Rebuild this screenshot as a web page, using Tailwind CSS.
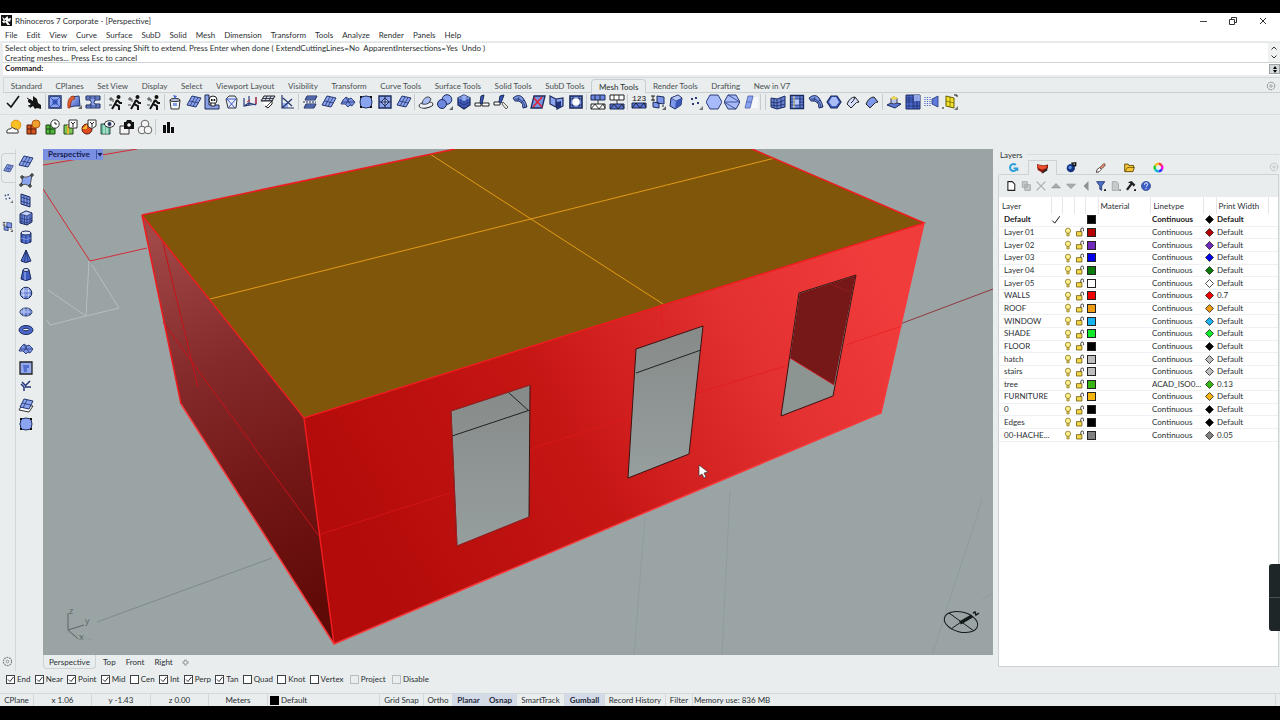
<!DOCTYPE html>
<html lang="en">
<head>
  <meta charset="UTF-8" />
  <meta name="viewport" content="width=device-width, initial-scale=1.0" />
  <title>Rhinoceros 7 Corporate - [Perspective]</title>
  <script src="https://cdn.jsdelivr.net/npm/@tailwindcss/browser@4"></script>
</head>
<body class="h-screen overflow-hidden flex flex-col bg-black pt-[13px] pb-[14px] font-['Lato','Open_Sans',sans-serif] text-[8px] leading-[12px] text-[#2b3033]">

  <!-- icon sprite -->
  <svg class="absolute size-0">
    <defs>
      <linearGradient id="b" x1="0" y1="0" x2="1" y2="1"><stop offset="0" stop-color="#a9bdf6"/><stop offset="1" stop-color="#3f5cc0"/></linearGradient>
    </defs>
    <symbol id="rhino" viewBox="0 0 12 12"><path d="M0 0h12v12H0z" fill="#111"/><path d="M1 2l3 2 3-3 1 3 3-1-1 4-3 0 3 4H7L5 8 3 9 1 7l2-1z" fill="#fff"/><path d="M4 5l2 1-2 1z" fill="#111"/></symbol>
    <symbol id="check" viewBox="0 0 16 16"><path d="M2 9l4 4 8-11" fill="none" stroke="#111" stroke-width="1.6"/></symbol>
    <symbol id="hand" viewBox="0 0 16 16"><path d="M2 6l2-1 3 2V2l4 3 1 4 3 2v4l-4-1-2 1-2-3-3 2-1-2 2-2-3-2z" fill="#161616"/><path d="M1 4l3 2M2 12l3-1" stroke="#161616"/></symbol>
    <symbol id="meshsq" viewBox="0 0 16 16"><path d="M2 2h12v12H2z" fill="#8ba4f0" stroke="#1b2a5c" stroke-width="1.4"/><path d="M2 2l4 4M14 2l-4 4M2 14l4-4M14 14l-4-4M6 6h4v4H6z" fill="#3654b8" stroke="#3654b8"/></symbol>
    <symbol id="paint" viewBox="0 0 16 16"><path d="M5 3l8-1 1 10-5 0-5 1z" fill="url(#b)" stroke="#27386e"/><path d="M2 14C1 7 3 2 8 2l1 3C5 5 5 9 4 14z" fill="#e35b2c" stroke="#7e2a18" stroke-width=".6"/><path d="M12 15h4v-4z" fill="#666"/></symbol>
    <symbol id="gridfold" viewBox="0 0 16 16"><path d="M1 2h14v4H10q-2 3 0 4h5v4H1v-3h4q3-3 0-5H1z" fill="#8ba4f0" stroke="#1b2a5c"/><path d="M5 2v4M10 2v4M1 4h14M1 12h14M6 10v4M11 10v4" stroke="#1b2a5c" stroke-width=".7"/></symbol>
    <symbol id="man" viewBox="0 0 16 16"><circle cx="10.500" cy="3" r="2" fill="#111"/><path d="M9 6l-2 4 4 2v4M9 6l3 3h2M7 10l-3 5" fill="none" stroke="#111" stroke-width="2"/><path d="M1 5h4v3M3 3v4M1 11h3" stroke="#333" stroke-width=".9" fill="none"/></symbol>
    <symbol id="bin" viewBox="0 0 16 16"><path d="M3 6h10l-1 9H4z" fill="#f4f6fa" stroke="#333"/><ellipse cx="8" cy="6" rx="5" ry="1.600" fill="#b9c3dd" stroke="#333"/><path d="M6 1l4 1-2 3z" fill="#4b68cf"/><path d="M6 9h4v3H6z" fill="#7f9bea"/></symbol>
    <symbol id="plane" viewBox="0 0 16 16"><path d="M6 2l9 2-5 9-9-2z" fill="#8ba4f0" stroke="#25366f"/><path d="M3.500 7l9 2M9 3L4 12M12 3.500L7 12.500" stroke="#25366f" stroke-width=".8"/></symbol>
    <symbol id="pillow" viewBox="0 0 16 16"><path d="M3 6l3-3 3 2 2-1 4 4-3 4-2-1-2 2-3-3-4 0z" fill="#7d98ea" stroke="#25366f" stroke-width=".9"/><path d="M6 4l5 7M2 8h12M9 5L6 10" stroke="#25366f" stroke-width=".8"/></symbol>
    <symbol id="skull" viewBox="0 0 16 16"><path d="M1 1h4v10h10v4H1z" fill="#8ba2e8" stroke="#1d2a55"/><circle cx="9" cy="6" r="4" fill="#fff" stroke="#222"/><path d="M7 9h4v3H7z" fill="#fff" stroke="#222"/><path d="M7 5h1.600v2H7zM9.600 5h1.600v2H9.600z" fill="#111"/></symbol>
    <symbol id="boxx" viewBox="0 0 16 16"><path d="M3 5l3-3h6l2 3-1 9H5z" fill="#e8edfb" stroke="#333"/><path d="M3 5h10L5 14M4 5l8 9" fill="none" stroke="#3d5ac6"/></symbol>
    <symbol id="dims" viewBox="0 0 16 16"><path d="M2 4v8l12-2V3M7 2v9M2 12l5-3 7 2" fill="none" stroke="#2b3f7f" stroke-width="1.200"/><path d="M14 3v7M5 8l3-2" stroke="#d23"/></symbol>
    <symbol id="tile" viewBox="0 0 16 16"><path d="M4 2h11l-3 5H1z" fill="#cfd9f6" stroke="#222"/><path d="M2 7h10v3l-4 4-3-2" fill="#fff" stroke="#222"/><path d="M7 2L5 7M11 2L9 7M6 13l7-7M3 4.500h11" stroke="#222" stroke-width=".8"/></symbol>
    <symbol id="axis" viewBox="0 0 16 16"><path d="M3 9h6v5H3z" fill="#9db2f2"/><path d="M3 1v13h12M3 14l10-9M4 4l9 8" fill="none" stroke="#26366e" stroke-width="1.200"/></symbol>
    <symbol id="stack" viewBox="0 0 16 16"><path d="M5 2h10l-2 4H3zM4 10h10l-2 4H2z" fill="#7d98ea" stroke="#1d2b5c"/><path d="M4 4h10M3 12h10" stroke="#1d2b5c" stroke-width=".9"/><path d="M1 8h13" stroke="#1d2b5c" stroke-dasharray="2 1"/></symbol>
    <symbol id="rsq" viewBox="0 0 16 16"><path d="M3 3q5-2 10 0 2 5 0 10-5 2-10 0-2-5 0-10z" fill="#8ba4f0" stroke="#1d2b5c"/><path d="M2 2h2v2H2zM12 2h2v2h-2zM2 12h2v2H2zM12 12h2v2h-2z" fill="#111"/></symbol>
    <symbol id="diag" viewBox="0 0 16 16"><path d="M2 2h12v12H2z" fill="#8ba3ea" stroke="#1d2b5c" stroke-width="1.400"/><path d="M8 2v12M2 8h12M8 4l4 4-4 4-4-4z" fill="#c3d0fa" stroke="#1d2b5c"/></symbol>
    <symbol id="cap" viewBox="0 0 16 16"><ellipse cx="8" cy="11" rx="7" ry="3" fill="#eef1f8" stroke="#222" transform="rotate(-8 8 11)"/><path d="M4 10c1-7 7-9 9-5l-2 4q-3 2-7 1z" fill="#a9bdf6" stroke="#222" stroke-width=".8"/></symbol>
    <symbol id="balls" viewBox="0 0 16 16"><circle cx="10" cy="5.500" r="4.800" fill="#8ba4f0" stroke="#1b2a5c"/><circle cx="5" cy="10" r="4.500" fill="#6c87dd" stroke="#1b2a5c"/><path d="M12 16h4v-4z" fill="#666"/></symbol>
    <symbol id="hexball" viewBox="0 0 16 16"><path d="M8 1l6 3v7l-6 4-6-4V4z" fill="#4461c7" stroke="#1b2a5c" stroke-width="1.300"/><path d="M8 1l6 3-6 3-6-3z" fill="#93abf2"/><path d="M8 7v8M5 3v9M11 3v9M2 8l6 3 6-3" stroke="#1b2a5c" stroke-width=".6" fill="none"/></symbol>
    <symbol id="cut" viewBox="0 0 16 16"><path d="M1 9h6v3H1zM8 9h7v3H8z" fill="#fff" stroke="#222"/><path d="M6 9l1-7 3-1-2 9z" fill="#3a56b8" stroke="#1b2a5c"/></symbol>
    <symbol id="cut2" viewBox="0 0 16 16"><path d="M1 8h6v3H1z" fill="#fff" stroke="#222"/><path d="M6 8l1-6 4-1-3 8z" fill="#3a56b8" stroke="#1b2a5c"/><path d="M10 8l5 5-2 2-4-5z" fill="#f1f1e8" stroke="#555"/></symbol>
    <symbol id="bend" viewBox="0 0 16 16"><path d="M1 4q6-5 10 0 3 4 4 9l-4 1q0-8-8-7z" fill="#7d98ea" stroke="#1b2a5c"/><path d="M3 5q8-1 10 8M7 3q-1 2-1 4M12 6l-3 3" stroke="#1b2a5c" stroke-width=".8" fill="none"/></symbol>
    <symbol id="redx" viewBox="0 0 16 16"><path d="M4 2h11l-3 12H1z" fill="#7b93e3" stroke="#1b2a5c" stroke-width="1.300"/><path d="M4 4l8 9M12 3L3 13" stroke="#e12430" stroke-width="1.500"/></symbol>
    <symbol id="tri" viewBox="0 0 16 16"><path d="M1 2l6 3v8l-6-3zM7 5l7-1v8l-6 3z" fill="#8ba4f0" stroke="#1b2a5c" stroke-width="1.200"/><path d="M8 8l4-1v6l-4 2z" fill="#22347a"/></symbol>
    <symbol id="hole" viewBox="0 0 16 16"><path d="M2 2h12v12H2z" fill="#7690e2" stroke="#1b2a5c" stroke-width="1.600"/><path d="M2 5h12M2 11h12M5 2v12M11 2v12" stroke="#1b2a5c" stroke-width=".9"/><circle cx="8" cy="8" r="3.800" fill="#fff"/></symbol>
    <symbol id="split" viewBox="0 0 16 16"><path d="M1 1h14v5H1z" fill="#6d88e0" stroke="#1b2a5c"/><path d="M1 10h14v5H1z" fill="#fff" stroke="#222"/><path d="M5 1v5M10 1v5M1 15l4-5 4 5 4-5 2 4M8 6v4" fill="none" stroke="#222" stroke-width=".9"/></symbol>
    <symbol id="split2" viewBox="0 0 16 16"><path d="M1 1h14v5H1z" fill="#fff" stroke="#222"/><path d="M1 10h14v5H1z" fill="#5470cf" stroke="#1b2a5c"/><path d="M5 1v5M10 1v5M1 15l4-5 4 5 4-5 2 4M8 6v4" fill="none" stroke="#222" stroke-width=".9"/></symbol>
    <symbol id="count" viewBox="0 0 16 16"><text x="1" y="7" font-family="Liberation Mono" font-size="8" fill="#111">123</text><path d="M1 9h14v5H1z" fill="#5974d6" stroke="#1b2a5c"/><path d="M1 14l4-5 4 5 4-5 2 4" fill="none" stroke="#111" stroke-width=".8"/></symbol>
    <symbol id="cubes" viewBox="0 0 16 16"><path d="M7 2l7 1v7l-7-1zM3 8l6 1v5l-6-1z" fill="#7d98ea" stroke="#1b2a5c"/><path d="M1 2h4M3 2v5M1 6h4M13 11v2" stroke="#222" fill="none"/><path d="M12 16h4v-4z" fill="#666"/></symbol>
    <symbol id="cube" viewBox="0 0 16 16"><path d="M3 4l7-3 4 3-1 7-6 4-5-3z" fill="#7d98ea" stroke="#1b2a5c"/><path d="M3 4l7-3 4 3-6 3z" fill="#b7c7fa" stroke="#1b2a5c" stroke-width=".6"/><path d="M8 7l-1 8 6-4 1-7z" fill="#3a56b8"/></symbol>
    <symbol id="dots" viewBox="0 0 16 16"><path d="M4 4h2v2H4zM8 3h2v2H8zM10 8h2v2h-2zM5 9h2v2H5z" fill="#2b3a78"/><path d="M12 16h4v-4z" fill="#777"/></symbol>
    <symbol id="hex" viewBox="0 0 16 16"><path d="M4 1h8l4 7-4 7H4L0 8z" fill="#a7bafa" stroke="#2c3d7a"/></symbol>
    <symbol id="hexl" viewBox="0 0 16 16"><path d="M4 1h8l4 7-4 7H4L0 8z" fill="#a7bafa" stroke="#2c3d7a"/><path d="M0 8h16M4 1l12 7M0 8l12 7" stroke="#2c3d7a" stroke-width=".8" fill="none"/></symbol>
    <symbol id="half" viewBox="0 0 16 16"><path d="M5 2h5L7 14H2zM3 8h5" fill="#8ba4f0" stroke="#4a5fae" stroke-width=".8"/><path d="M11 3h4v11H8z" fill="#f6f8fc"/></symbol>
    <symbol id="wall" viewBox="0 0 16 16"><path d="M1 4l6 1 8-3v11l-8 2-6-2z" fill="#6a83d6" stroke="#1b2a5c"/><path d="M7 5v10M1 8l6 1 8-3M4 4v10M11 4v10M1 11l6 1 8-2" stroke="#1b2a5c" stroke-width=".8" fill="none"/></symbol>
    <symbol id="grid" viewBox="0 0 16 16"><path d="M1.500 1.500h13v13h-13z" fill="#6a86e0" stroke="#1b2a5c" stroke-width="1.300"/><path d="M2 5h12M2 8h12M2 11h12M11 2v12" stroke="#1b2a5c" stroke-width=".8"/><path d="M5 2v12" stroke="#e4dc8a"/><path d="M6 5.500h4v5H6z" fill="#b8c8fb"/></symbol>
    <symbol id="leaf" viewBox="0 0 16 16"><path d="M2 10q3-7 8-7l4 5q-3 0-4 2l-4 4z" fill="#d5dffb" stroke="#222"/><path d="M10 3q-1 4-4 6" stroke="#222" fill="none"/></symbol>
    <symbol id="leaf2" viewBox="0 0 16 16"><path d="M2 10q3-7 8-7l4 5q-3 0-4 2l-4 4z" fill="#7d98ea" stroke="#222"/></symbol>
    <symbol id="gem" viewBox="0 0 16 16"><path d="M5 2h6l4 6-4 6H5L1 8z" fill="#3f5dc4" stroke="#1b2a5c" stroke-width="1.200"/><path d="M6 3h4l3 5-3 4H6L3 8z" fill="#a9bdf6"/></symbol>
    <symbol id="pedestal" viewBox="0 0 16 16"><path d="M1 11l6-3 8 2-6 4z" fill="#5975d6" stroke="#1b2a5c"/><path d="M5 4q3-2 6 0v5q-3 2-6 0z" fill="#b4c3ee" stroke="#445"/><ellipse cx="8" cy="4" rx="3" ry="1.500" fill="#f5d74c"/></symbol>
    <symbol id="ell" viewBox="0 0 16 16"><path d="M1 1h14v14H1z" fill="#4b68cf" stroke="#1b2a5c"/><path d="M1 4h11v11M1 8h8v7M4 1v14M8 1v14M1 12h14M12 1v14M1 6h14" fill="none" stroke="#1b2a5c" stroke-width=".6"/><path d="M9 1h6v6H9z" fill="#a9bdf6" opacity=".8"/></symbol>
    <symbol id="fade" viewBox="0 0 16 16"><path d="M9 5l6-3v11l-6-3z" fill="#5f7cdb" stroke="#22347a" stroke-width=".8"/><path d="M2 3v10M4.500 3v10M7 3v9" stroke="#4a64c6" stroke-width="1.200" stroke-dasharray="1 1"/></symbol>
    <symbol id="yellow" viewBox="0 0 16 16"><path d="M4 2l8 2v10l-8-2z" fill="#f4e22a" stroke="#665c00"/><path d="M4 7l8 2M8 3v10" stroke="#665c00" stroke-width=".7"/><path d="M1 15v-2M12 1h3v2" stroke="#111" fill="none"/><path d="M12 16h4v-4z" fill="#777"/></symbol>
    <symbol id="sun" viewBox="0 0 16 16"><circle cx="10" cy="6" r="4.800" fill="#f8c224" stroke="#e88d12"/><path d="M1 14q-1-4 3-4 2-3 5 0 4 0 3 4z" fill="#fff" stroke="#333"/></symbol>
    <symbol id="bricks" viewBox="0 0 16 16"><path d="M2 6h9v9H2z" fill="#d4541f" stroke="#571c0b"/><path d="M2 10h9M6 6v9" stroke="#571c0b"/><circle cx="11" cy="5" r="4" fill="#f0a030" stroke="#b55b11"/></symbol>
    <symbol id="gclock" viewBox="0 0 16 16"><path d="M2 6h9v9H2z" fill="#4fb53a" stroke="#1e4618"/><path d="M2 10h9M6 6v9" stroke="#1e4618"/><circle cx="11" cy="5" r="4.200" fill="#fff" stroke="#333"/><path d="M11 3v2h2" stroke="#222" fill="none"/></symbol>
    <symbol id="gfunnel" viewBox="0 0 16 16"><path d="M2 6h9v9H2z" fill="#7bc653" stroke="#27431f"/><path d="M6 6v9" stroke="#e8b030" stroke-width="2"/><path d="M7 1h8v8H7z" fill="#fff" stroke="#333"/><path d="M9 3l2 2 2-2M11 5v3" stroke="#222" fill="none"/></symbol>
    <symbol id="rfunnel" viewBox="0 0 16 16"><circle cx="6" cy="10" r="5" fill="#de4b1e" stroke="#5a1a0a"/><path d="M1 10h5V5z" fill="#f6b72c"/><path d="M7 1h8v6l-3 2H9L7 7z" fill="#fff" stroke="#333"/><path d="M9 3l2 2 2-2M11 5v3" stroke="#222" fill="none"/></symbol>
    <symbol id="eye" viewBox="0 0 16 16"><path d="M2 5h9v10H2z" fill="#62c09d" stroke="#2c4a44"/><path d="M5 6v9M8 6v9" stroke="#e8f4f0"/><ellipse cx="10.500" cy="5" rx="5" ry="3.300" fill="#fff" stroke="#222"/><circle cx="10.500" cy="5" r="2" fill="#26345c"/></symbol>
    <symbol id="cam" viewBox="0 0 16 16"><path d="M2 7h9v8H2z" fill="#f4f4f4" stroke="#333"/><path d="M6 3h2l1-2h4l1 2h2v7H6z" fill="#111"/><circle cx="11" cy="6" r="1.800" fill="#fff"/></symbol>
    <symbol id="trefoil" viewBox="0 0 16 16"><g fill="#f5f5f5" stroke="#555" stroke-width=".9"><circle cx="8" cy="5" r="3.800"/><circle cx="5" cy="11" r="3.800"/><circle cx="11" cy="11" r="3.800"/></g></symbol>
    <symbol id="bars" viewBox="0 0 16 16"><path d="M3 6h3v8H3zM7 3h3v11H7zM11 8h3v6h-3z" fill="#0c0c0c"/></symbol>
    <symbol id="quadpt" viewBox="0 0 16 16"><path d="M4 4q5 1 10-2l-2 11q-5-3-9-1 2-4 1-8z" fill="#8ba4f0" stroke="#333" stroke-width=".8"/><g fill="#fff" stroke="#111"><path d="M3 3h2v2H3zM13 1h2v2h-2zM2 11h2v2H2zM11 12h2v2h-2z"/></g></symbol>
    <symbol id="panel" viewBox="0 0 16 16"><path d="M3 2l9 3v10l-9-3z" fill="#7d98ea" stroke="#1b2a5c"/><path d="M6 3v10M9 4v10M3 5l9 3M3 9l9 3" stroke="#1b2a5c" stroke-width=".7"/></symbol>
    <symbol id="boxg" viewBox="0 0 16 16"><path d="M2 4l6-3 6 2v9l-5 3-7-2z" fill="#6c87dd" stroke="#1b2a5c"/><path d="M2 4l7 2 5-3-6-2z" fill="#c4d1fb" stroke="#1b2a5c" stroke-width=".7"/><path d="M9 6v9M4 5v9M6.500 5v9M12 5v8M2 8l7 2 5-2M2 11l7 2 5-3" stroke="#1b2a5c" stroke-width=".6" fill="none"/></symbol>
    <symbol id="cyl" viewBox="0 0 16 16"><path d="M3 4v9q5 3 10 0V4z" fill="#3755b5" stroke="#1b2a5c"/><ellipse cx="8" cy="4" rx="5" ry="2" fill="#dfe7fd" stroke="#1b2a5c"/><path d="M6 6v8M10 6v8M3 9q5 3 10 0" stroke="#9fb4f4" stroke-width=".6" fill="none"/></symbol>
    <symbol id="cone" viewBox="0 0 16 16"><path d="M8 2l5 11q-5 3-10 0z" fill="#5472d2" stroke="#1b2a5c"/><path d="M8 2L6.500 14M8 2l2 12" stroke="#1b2a5c" stroke-width=".7"/></symbol>
    <symbol id="tcone" viewBox="0 0 16 16"><path d="M5 4h6l2 9q-5 3-10 0z" fill="#3e5cc0" stroke="#1b2a5c"/><ellipse cx="8" cy="4" rx="3" ry="1.500" fill="#e3eafd" stroke="#1b2a5c"/><path d="M7 6v8" stroke="#a9bdf6"/></symbol>
    <symbol id="ball" viewBox="0 0 16 16"><circle cx="8" cy="8" r="5.800" fill="url(#b)" stroke="#1b2a5c"/><path d="M3 6h10M3 10h10M6 3q-2 5 0 10M10 3q2 5 0 10" stroke="#e3eafd" stroke-width=".7" fill="none"/></symbol>
    <symbol id="oval" viewBox="0 0 16 16"><ellipse cx="8" cy="8" rx="6" ry="4" fill="url(#b)" stroke="#1b2a5c"/><path d="M2 8h12M6 4v8M10 4v8" stroke="#e3eafd" stroke-width=".6"/></symbol>
    <symbol id="torus" viewBox="0 0 16 16"><ellipse cx="8" cy="8" rx="7" ry="4.500" fill="#4a67cc" stroke="#1b2a5c"/><ellipse cx="8" cy="7.500" rx="3" ry="1.300" fill="#e9eded" stroke="#1b2a5c"/></symbol>
    <symbol id="hmap" viewBox="0 0 16 16"><path d="M2 2h12v12H2z" fill="#93a9ee" stroke="#222" stroke-width="1.300"/><path d="M5 5h6v3H9v4H6z" fill="#5470cf"/></symbol>
    <symbol id="sprout" viewBox="0 0 16 16"><path d="M6 13V9L3 6M7 8l5-5M7 9h6M4 4l3 3" stroke="#22357b" stroke-width="1.500" fill="none"/></symbol>
    <symbol id="layers2" viewBox="0 0 16 16"><path d="M4 8l11 1-4 6-10-2z" fill="#fff" stroke="#333"/><path d="M6 2l9 2-4 8-9-2z" fill="#8ba4f0" stroke="#25366f"/><path d="M4 6l9 2M9 3L5 11" stroke="#25366f" stroke-width=".8"/></symbol>
    <symbol id="gear" viewBox="0 0 12 12"><circle cx="6" cy="6" r="4.500" fill="none" stroke="#7b8285" stroke-width="1.200" stroke-dasharray="2 .8"/><circle cx="6" cy="6" r="1.500" fill="none" stroke="#7b8285" stroke-width=".8"/></symbol>
    <symbol id="props" viewBox="0 0 16 16"><circle cx="8" cy="8" r="5" fill="none" stroke="#2d9fd8" stroke-width="3" stroke-dasharray="25 7" transform="rotate(20 8 8)"/><path d="M8 9h6v4" stroke="#2d9fd8" stroke-width="2" fill="none"/></symbol>
    <symbol id="lay" viewBox="0 0 16 16"><path d="M0 2l9 2 7-2v5l-7 8-8-5z" fill="#8f1a12"/><path d="M0 2l9 2 6-1-1 5-7 2-6-3z" fill="#f0512d" stroke="#5a120c" stroke-width=".6"/><path d="M6 15l9-8v4l-7 4z" fill="#222"/></symbol>
    <symbol id="rend" viewBox="0 0 16 16"><circle cx="7" cy="9" r="6" fill="#15367f"/><circle cx="6" cy="8" r="2.500" fill="#5a90e6"/><path d="M7 1l8-1v6l-4 1z" fill="#111"/><path d="M11 2h2v2h-2z" fill="#cde"/></symbol>
    <symbol id="brush" viewBox="0 0 16 16"><path d="M2 15l1-4 4-3 6-6q3 1 1 4l-6 5-2 3z" fill="#e88a62" stroke="#433"/><path d="M2 15l1-4 4-3 2 3-3 3z" fill="#fff" stroke="#433"/></symbol>
    <symbol id="folder" viewBox="0 0 16 16"><path d="M1 3h5l1 2h7v3h1l-2 6H1z" fill="#f4c534" stroke="#5c4605" stroke-width="1.300"/><path d="M2 13l3-5h10" stroke="#5c4605" fill="none"/></symbol>
    <symbol id="wheel" viewBox="0 0 16 16"><g fill="none" stroke-width="3.500"><path d="M8 2.500a5.500 5.500 0 0 1 4.800 2.800" stroke="#f33"/><path d="M12.800 5.300a5.500 5.500 0 0 1 0 5.400" stroke="#f0d"/><path d="M12.800 10.700A5.500 5.500 0 0 1 8 13.500" stroke="#33f"/><path d="M8 13.500a5.500 5.500 0 0 1-4.800-2.800" stroke="#0bd"/><path d="M3.200 10.700a5.500 5.500 0 0 1 0-5.400" stroke="#2c3"/><path d="M3.200 5.300A5.500 5.500 0 0 1 8 2.500" stroke="#f9c012"/></g></symbol>
    <symbol id="doc" viewBox="0 0 16 16"><path d="M3 1h7l4 4v10H3z" fill="#fff" stroke="#222" stroke-width="1.700"/></symbol>
    <symbol id="copy" viewBox="0 0 16 16"><path d="M2 1h8v9H2zM6 6h9v9H6z" fill="#c6caca" stroke="#9ea3a4" stroke-width="1.300"/></symbol>
    <symbol id="ex" viewBox="0 0 16 16"><path d="M1 1l14 14M15 1L1 15" stroke="#a9adae" stroke-width="1.800"/></symbol>
    <symbol id="up" viewBox="0 0 16 16"><path d="M1 11l7-7 7 7z" fill="#a9adae" stroke="#83888a"/></symbol>
    <symbol id="down" viewBox="0 0 16 16"><path d="M1 5l7 7 7-7z" fill="#a9adae" stroke="#83888a"/></symbol>
    <symbol id="left" viewBox="0 0 16 16"><path d="M12 0v16L4 8z" fill="#8d9294"/></symbol>
    <symbol id="filter" viewBox="0 0 16 16"><path d="M1 1h13L9 8v7l-3-2V8z" fill="#4c72cf" stroke="#1e2f63" stroke-width="1.300"/><path d="M13 13h3v3h-3z" fill="#111"/></symbol>
    <symbol id="gdoc" viewBox="0 0 16 16"><path d="M2 1h7l3 3v11H2z" fill="#c6caca" stroke="#9ea3a4" stroke-width="1.300"/><path d="M13 13h3v3h-3z" fill="#888"/></symbol>
    <symbol id="hammer" viewBox="0 0 16 16"><path d="M3 2l6-2 6 6-3 3-2-3L3 15l-3-2 7-9z" fill="#222"/><path d="M13 13h3v3h-3z" fill="#111"/></symbol>
    <symbol id="help" viewBox="0 0 16 16"><circle cx="8" cy="8" r="7.300" fill="#3c5fc6" stroke="#22397f"/><path d="M5.500 6q0-3 2.500-3t2.500 2.300T8 9M8 11v2" stroke="#fff" stroke-width="1.500" fill="none"/></symbol>
    <symbol id="bulb" viewBox="0 0 10 12"><circle cx="5" cy="4.500" r="3.300" fill="#fbf08c" stroke="#8b7620"/><path d="M3.500 8h3v3h-3z" fill="#d9c34a" stroke="#8b7620" stroke-width=".7"/></symbol>
    <symbol id="lock" viewBox="0 0 10 12"><path d="M6 6V3q0-2 1.800-2T9.500 3v2" fill="none" stroke="#333" stroke-width="1.200"/><path d="M.6 5.500h6.800v5.500H.6z" fill="#f4d84b" stroke="#6b560b"/></symbol>
  </svg>

  <div id="app" class="relative flex-1 min-h-0 flex flex-col bg-[#e9eded]">

    <header class="bg-white">
      <div class="flex items-center h-[15px] pl-[1px]">
        <svg class="w-[11px] h-[11px]"><use href="#rhino"/></svg>
        <h1 class="ml-[3px]">Rhinoceros 7 Corporate - [Perspective]</h1>
        <div class="ml-auto flex pr-[7px] gap-[10px]">
          <button aria-label="Minimize" class="w-5 flex justify-center"><svg class="size-[10px]" viewBox="0 0 10 10"><path d="M2 5.500h7" stroke="#444"/></svg></button>
          <button aria-label="Restore" class="w-5 flex justify-center"><svg class="size-[10px]" viewBox="0 0 10 10"><path d="M1.500 3.500h5v5h-5zM3.500 3V1.500h5v5H7" fill="none" stroke="#333"/></svg></button>
          <button aria-label="Close" class="w-5 flex justify-center"><svg class="size-[10px]" viewBox="0 0 10 10"><path d="M2 2l6 6M8 2L2 8" stroke="#333"/></svg></button>
        </div>
      </div>
      <nav id="menu" class="flex items-center h-[13px] pl-[5px] gap-[9px]"></nav>
    </header>

    <section class="mt-[1px] ml-[3px] flex flex-col">
      <div class="flex justify-between bg-white border-t border-b border-t-[#e3e7e8] border-b-[#cfd5d6] h-[21px] leading-[10px]">
        <div class="pl-[2px] whitespace-pre">Select object to trim, select pressing Shift to extend. Press Enter when done ( ExtendCuttingLines=No  ApparentIntersections=Yes  Undo )
Creating meshes... Press Esc to cancel</div>
        <div class="w-[12px] bg-[#f0f2f2] flex flex-col items-center justify-around">
          <svg class="w-[6px] h-[4px]" viewBox="0 0 6 4"><path d="M.5 3.500L3 1l2.500 2.500" fill="none" stroke="#333"/></svg>
          <svg class="w-[6px] h-[4px]" viewBox="0 0 6 4"><path d="M.5 .5L3 3 5.500 .5" fill="none" stroke="#333"/></svg>
        </div>
      </div>
      <div class="flex bg-white h-[12px] leading-[11px]">
        <label for="cmd" class="pl-[2px] font-bold text-[#1d2022]">Command:</label>
        <input id="cmd" class="flex-1 outline-none">
        <div class="w-[11px] my-[1px] bg-[#d5dadb] border border-[#9da3a5] flex flex-col items-center justify-around">
          <svg class="w-[4px] h-[3px]" viewBox="0 0 4 3"><path d="M0 3l2-3 2 3z"/></svg>
          <svg class="w-[4px] h-[3px]" viewBox="0 0 4 3"><path d="M0 0l2 3 2-3z"/></svg>
        </div>
      </div>
    </section>

    <div class="mt-[2px] ml-[3px] border-t border-l border-[#d3d9da] flex items-end h-[16px]">
      <div id="tabs" class="flex items-end w-[793px]"></div>
      <div class="flex-1 h-[14px] border-b border-[#c9cfd0] flex items-center justify-end pr-[4px]">
        <button aria-label="Toolbar options"><svg class="size-[10px] block"><use href="#gear"/></svg></button>
      </div>
    </div>
    <div class="flex items-center h-[22px] pb-[3px] pl-[2px] border-b border-[#d8dddf]">
      <div class="tools flex w-[42px]" data-tools="check hand"></div>
      <hr class="w-[2px] h-4 border-0 border-r border-[#c6cccd]">
      <div class="tools flex w-[56px]" data-tools="meshsq paint gridfold"></div>
      <hr class="w-[3px] mr-[2px] h-4 border-0 border-r border-[#c6cccd]">
      <div class="tools flex w-[56px]" data-tools="man man man"></div>
      <hr class="w-[2px] mr-[1px] h-4 border-0 border-r border-[#c6cccd]">
      <div class="tools flex w-[130px]" data-tools="bin plane skull boxx dims tile axis"></div>
      <hr class="w-[3px] mr-[2px] h-4 border-0 border-r border-[#c6cccd]">
      <div class="tools flex w-[112px]" data-tools="stack plane pillow rsq diag plane"></div>
      <hr class="w-[2px] mr-[2px] h-4 border-0 border-r border-[#c6cccd]">
      <div class="tools flex w-[168px]" data-tools="cap balls hexball cut cut2 bend redx tri hole"></div>
      <hr class="w-[2px] mr-[2px] h-4 border-0 border-r border-[#c6cccd]">
      <div class="tools flex w-[37px]" data-tools="split split2"></div>
      <hr class="w-[2px] mr-[2px] h-4 border-0 border-r border-[#c6cccd]">
      <div class="tools flex w-[130px]" data-tools="count cubes cube dots hex hexl half"></div>
      <hr class="w-[6px] mr-[3px] h-4 border-0 border-x border-[#c6cccd]">
      <div class="tools flex w-[112px]" data-tools="wall grid bend gem leaf leaf2"></div>
      <hr class="w-[2px] mr-[2px] h-4 border-0 border-r border-[#c6cccd]">
      <div class="tools flex w-[74px]" data-tools="pedestal ell fade yellow"></div>
    </div>
    <div class="flex items-center h-[24px] pl-[5px]">
      <div class="tools flex w-[149px]" data-tools="sun bricks gclock gfunnel rfunnel eye cam trefoil"></div>
      <hr class="w-[2px] mr-[2px] h-4 border-0 border-r border-[#c6cccd]">
      <div class="tools flex w-[19px]" data-tools="bars"></div>
    </div>

    <main class="flex-1 min-h-0 flex mt-[10px]">
      <aside class="w-[43px] flex">
        <div class="w-[16px] flex flex-col items-center border-r border-[#d3d9da]">
          <button aria-label="Mesh creation" class="mt-[4px] -mr-[1px] w-[15px] h-[30px] border border-r-0 border-[#cdd3d4] rounded-l flex items-center justify-center"><svg class="size-[11px]"><use href="#plane"/></svg></button>
          <button aria-label="Points" class="h-[29px]"><svg class="size-[11px]"><use href="#dots"/></svg></button>
          <button aria-label="Cubes" class="h-[29px]"><svg class="size-[11px]"><use href="#cubes"/></svg></button>
          <button aria-label="Sidebar options" class="mt-auto mb-[4px]"><svg class="size-[11px] block"><use href="#gear"/></svg></button>
        </div>
        <div class="tools flex flex-col items-center w-[19px] mt-[4px] h-[280px]" data-tools="plane quadpt panel boxg cyl cone tcone ball oval torus pillow hmap sprout layers2 rsq"></div>
      </aside>

      <section class="flex-1 min-w-0 flex flex-col">
        <div class="relative flex-1 min-h-0 bg-[#9aa4a5]">
          <svg class="absolute inset-0 size-full" viewBox="43 149 950 506" preserveAspectRatio="none">
            <defs>
              <linearGradient id="front" gradientUnits="userSpaceOnUse" x1="360" y1="560" x2="880" y2="270">
                <stop offset="0" stop-color="#b20b09"/><stop offset=".4" stop-color="#c61614"/><stop offset=".75" stop-color="#e33030"/><stop offset="1" stop-color="#f03c3b"/>
              </linearGradient>
              <linearGradient id="side" gradientUnits="userSpaceOnUse" x1="150" y1="240" x2="310" y2="610">
                <stop offset="0" stop-color="#a04747"/><stop offset=".35" stop-color="#852a2b"/><stop offset=".65" stop-color="#741817"/><stop offset="1" stop-color="#600a08"/>
              </linearGradient>
              <linearGradient id="glass" x1="0" y1="0" x2="0" y2="1"><stop offset="0" stop-color="#868b89"/><stop offset="1" stop-color="#969e9e"/></linearGradient>
            </defs>
            <g fill="none" stroke="#8c9697" stroke-width="1">
              <path d="M97 622L272 558" stroke="#7f898a"/>
              <path d="M92 640L66 632M645 516L634 655M730 490L722 655M982 500L932 655M993 592L982 600" stroke="#919b9c"/>
              <path d="M86 316L50 325l-3-5M48 290l38 26 3-55M92 265l27 43-33 8" stroke="#b7bebf"/>
            </g>
            <path d="M43 165L137 149M43 189l47 72 57-13" fill="none" stroke="#d42a35"/>
            <path d="M900 324l93-35" stroke="#903840"/>
            <path d="M142 215L304 418 334 644 181 404z" fill="url(#side)"/>
            <path d="M142 215L455 149h297l172 74L304 418z" fill="#80570a"/>
            <path d="M304 418L924 223 881 413 334 644z" fill="url(#front)"/>
            <path d="M430 154l233 150M210 299L775 158" stroke="#e39a17" fill="none"/>
            <path d="M163 243l35 144M163 322l155 213" stroke="#c41219" fill="none"/>
            <path d="M318 535L450 493M530 449l103-33M697 393l89-27M846 345l56-19M662 304v26" stroke="#e2191b" fill="none" opacity=".6"/>
            <path d="M142 215L455 149M752 149l172 74L304 418 142 215l39 189M304 418l30 226" stroke="#ee1c1f" stroke-width="1.500" fill="none"/>
            <path d="M181 404l153 240 547-231 43-190" stroke="#f8393c" stroke-width="1.500" fill="none"/>
            <g stroke="#3a1212">
              <path d="M451 411l79-26-1 132-72 29z" fill="url(#glass)"/>
              <path d="M636 349l67-23-14 128-61 24z" fill="url(#glass)"/>
              <path d="M799 293l57-18-23 121-52 20z" fill="#8d9593"/>
              <path d="M452 436l78-26M508 392l21 19M636 373l65-23" stroke="#222" fill="none"/>
            </g>
            <path d="M799.500 293.500l56-18L834 385l-44-27z" fill="#761817"/>
            <path d="M790 358l44 27" stroke="#c9232b"/>
            <path d="M830 284l20 8" stroke="#8c1c20"/>
            <path d="M451 411l79-26M457 546l72-29M451 411l6 135" stroke="#e22a2c" fill="none" opacity=".6"/>
            <g stroke="#5d6466" fill="none"><path d="M68 630v-17M68 630l16-5M68 630l10 9"/></g>
            <g fill="#5d6466" font-size="9" font-family="Open Sans"><text x="69" y="614">z</text><text x="85" y="624">y</text><text x="79" y="640">x</text></g>
            <g stroke="#14191a" fill="none">
              <ellipse cx="961" cy="622" rx="17" ry="10" transform="rotate(14 961 622)"/>
              <path d="M949 613l25 18M951 629l10-7"/>
              <path d="M960 623l12-7" stroke-width="3.500"/>
              <path d="M973 613l2-1 1 3 3-2" stroke-width="1.500"/>
            </g>
            <path d="M699 465v11l3-2 2 4 2-1-2-4 4-1z" fill="#fff" stroke="#333" stroke-width=".7"/>
          </svg>
          <button class="absolute left-0 top-0 h-[11px] w-[60px] pl-[5px] bg-[#7a8ee2] text-[#14204e] font-bold leading-[11px] flex items-center">Perspective
            <svg class="absolute right-0 top-0 w-[8px] h-[11px]" viewBox="0 0 8 11"><path d="M1.500 1v9" stroke="#4155a6"/><path d="M2.500 4h5L5 7.500z" fill="#14204e"/></svg>
          </button>
        </div>
        <div class="flex h-[14px] leading-[14px] mb-[2px]">
          <button class="px-[5px] border-x border-b border-[#cdd3d4] rounded-b">Perspective</button>
          <button class="ml-[7px]">Top</button>
          <button class="ml-[10px]">Front</button>
          <button class="ml-[10px]">Right</button>
          <button aria-label="New viewport" class="ml-[9px]"><svg class="size-[7px]" viewBox="0 0 8 8"><path d="M3 1h2v2h2v2H5v2H3V5H1V3h2z" fill="none" stroke="#8a9092" stroke-width=".9"/></svg></button>
        </div>
      </section>

      <aside class="w-[287px] pl-[5px] pr-[1px] pb-[4px] flex flex-col">
        <div class="flex items-center h-[11px] gap-[3px]"><h2 class="pl-[2px]">Layers</h2><hr class="flex-1 border-[#d8dddf]"></div>
        <div class="flex items-end">
          <div id="ptabs" class="flex pl-[1px]"></div>
          <div class="flex-1 h-[15px] border-b border-[#cdd3d4] flex justify-end items-center"><svg class="size-[10px] opacity-50"><use href="#gear"/></svg></div>
        </div>
        <div class="flex-1 flex flex-col border border-t-0 border-[#cdd3d4] bg-white">
          <div id="ltools" class="flex items-center h-[22px] pl-[4px] bg-[#e9eded]"></div>
          <table class="w-full h-[245px] table-fixed border-collapse text-left">
            <colgroup>
              <col class="w-[52px]"><col class="w-[11px]"><col class="w-[12px]"><col class="w-[11px]"><col class="w-[13px]"><col class="w-[52px]"><col class="w-[53px]"><col class="w-[13px]"><col class="w-[52px]"><col>
            </colgroup>
            <thead>
              <tr class="h-[17px] *:p-0 *:font-normal *:border-r *:border-[#e3e7e8] *:whitespace-nowrap">
                <th class="pl-[3px]!">Layer</th><th></th><th></th><th></th><th></th><th class="pl-[2px]!">Material</th><th class="pl-[3px]!">Linetype</th><th></th><th class="pl-[2px]!">Print Width</th><th class="border-r-0!"></th>
              </tr>
            </thead>
            <tbody id="rows"></tbody>
          </table>
        </div>
      </aside>
    </main>

    <form id="osnap" class="flex items-center justify-between h-[16px] pl-[6px] w-[429px]"></form>

    <footer class="mt-[6px] flex h-[13px] leading-[12px] border-t border-[#d3d9da] text-center *:border-r *:border-[#d3d9da] *:whitespace-nowrap">
      <button class="w-[34px]">CPlane</button>
      <span class="w-[58px]">x 1.06</span>
      <span class="w-[59px]">y -1.43</span>
      <span class="w-[58px]">z 0.00</span>
      <button class="w-[59px]">Meters</button>
      <button class="w-[112px] pl-[2px] flex items-center gap-[2px]"><i class="size-[9px] bg-black"></i>Default</button>
      <button class="w-[44px]">Grid Snap</button>
      <button class="w-[29px]">Ortho</button>
      <button class="w-[32px] bg-[#d3dae8] font-bold text-[#262b3a]">Planar</button>
      <button class="w-[32px] bg-[#d3dae8] font-bold text-[#262b3a]">Osnap</button>
      <button class="w-[48px]">SmartTrack</button>
      <button class="w-[40px] bg-[#d3dae8] font-bold text-[#262b3a]">Gumball</button>
      <button class="w-[61px]">Record History</button>
      <button class="w-[27px]">Filter</button>
      <span class="flex-1 mr-[4px] text-left pl-[1px]">Memory use: 836 MB</span>
    </footer>

    <div class="absolute right-0 top-[551px] w-[11px] h-[67px] rounded-l-[3px] bg-[#1f2628]"><div class="mt-[33px] border-t border-[#4a5254]"></div></div>
  </div>

  <script>
    const $ = id => document.getElementById(id);
    const icon = (name, cls) => `<svg class="${cls}"><use href="#${name}"/></svg>`;

    $('menu').innerHTML = ['File', 'Edit', 'View', 'Curve', 'Surface', 'SubD', 'Solid', 'Mesh', 'Dimension', 'Transform', 'Tools', 'Analyze', 'Render', 'Panels', 'Help']
      .map(m => `<button>${m}</button>`).join('');

    $('tabs').innerHTML = ['Standard', 'CPlanes', 'Set View', 'Display', 'Select', 'Viewport Layout', 'Visibility', 'Transform', 'Curve Tools', 'Surface Tools', 'Solid Tools', 'SubD Tools', 'Mesh Tools', 'Render Tools', 'Drafting', 'New in V7']
      .map(t => t === 'Mesh Tools'
        ? `<button class="h-[14px] grow whitespace-nowrap border-t border-x border-[#c9cfd0] rounded-t">${t}</button>`
        : `<button class="h-[14px] grow whitespace-nowrap border-b border-[#c9cfd0] text-[#4a5053]">${t}</button>`).join('');

    document.querySelectorAll('.tools').forEach(el => {
      el.innerHTML = el.dataset.tools.split(' ')
        .map(n => `<button aria-label="${n}" class="flex-1 flex items-center justify-center">${icon(n, 'size-4 shrink-0')}</button>`).join('');
    });

    $('ptabs').innerHTML = ['props', 'lay', 'rend', 'brush', 'folder', 'wheel']
      .map(n => n === 'lay'
        ? `<button aria-label="${n}" class="w-[29px] h-[15px] flex items-center justify-center border-t border-x border-[#cdd3d4]">${icon(n, 'size-[11px]')}</button>`
        : `<button aria-label="${n}" class="w-[29px] h-[15px] flex items-center justify-center border-b border-[#cdd3d4]">${icon(n, 'size-[11px]')}</button>`).join('');

    $('ltools').innerHTML = ['doc', 'copy', 'ex', 'up', 'down', 'left', 'filter', 'gdoc', 'hammer', 'help']
      .map(n => `<button aria-label="${n}" class="w-[15px] flex justify-center">${icon(n, 'size-[10px]')}</button>`).join('');

    const layers = [
      ['Default', '#000'], ['Layer 01', '#b30000'], ['Layer 02', '#7029b8'], ['Layer 03', '#0000ee'], ['Layer 04', '#0a7a0a'],
      ['Layer 05', '#fff'], ['WALLS', '#f00000', '0.7'], ['ROOF', '#ee9a12'], ['WINDOW', '#19b4ee'], ['SHADE', '#12ea2c'],
      ['FLOOR', '#000'], ['hatch', '#bebebe'], ['stairs', '#bebebe'], ['tree', '#37b512', '0.13', 'ACAD_ISO0...'],
      ['FURNITURE', '#f5b312'], ['0', '#000'], ['Edges', '#000'], ['00-HACHE...', '#808080', '0.05']
    ];
    $('rows').innerHTML = layers.map(([name, color, width = 'Default', type = 'Continuous'], i) => `
      <tr class="border-b border-[#eef0f1] leading-[11px] *:p-0 *:whitespace-nowrap ${i ? '' : 'font-bold text-[#1d2022]'}">
        <td class="pl-[5px]!">${name}</td>
        <td>${i ? '' : icon('check', 'size-[10px]')}</td>
        <td>${i ? icon('bulb', 'w-[8px] h-[10px] mx-auto') : ''}</td>
        <td>${i ? icon('lock', 'w-[8px] h-[10px] mx-auto') : ''}</td>
        <td><div class="size-[9px] mx-auto border border-[#222]" style="background:${color}"></div></td>
        <td></td>
        <td class="pl-[2px]!">${type}</td>
        <td><svg class="size-[9px] mx-auto" viewBox="0 0 9 9"><path d="M4.500 .5l4 4-4 4-4-4z" fill="${color}" stroke="#222" stroke-width=".8"/></svg></td>
        <td class="pl-[1px]!">${width}</td>
        <td></td>
      </tr>`).join('');

    const snaps = { End: 1, Near: 1, Point: 1, Mid: 1, Cen: 0, Int: 1, Perp: 1, Tan: 1, Quad: 0, Knot: 0, Vertex: 0, Project: 2, Disable: 2 };
    $('osnap').innerHTML = Object.entries(snaps).map(([name, s]) => `
      <label class="relative flex items-center gap-[2px] ${s === 2 ? 'ml-[2px]' : ''}">
        <input type="checkbox" ${s === 1 ? 'checked' : ''} class="peer appearance-none size-[9px] border ${s === 2 ? 'border-[#b9bfc0]' : 'border-[#3c4143] bg-white'}">
        <svg class="absolute left-[1px] size-[7px] hidden peer-checked:block" viewBox="0 0 7 7"><path d="M1 3.500l2 2L6.500 1" fill="none" stroke="#333"/></svg>${name}
      </label>`).join('');
  </script>
</body>
</html>
